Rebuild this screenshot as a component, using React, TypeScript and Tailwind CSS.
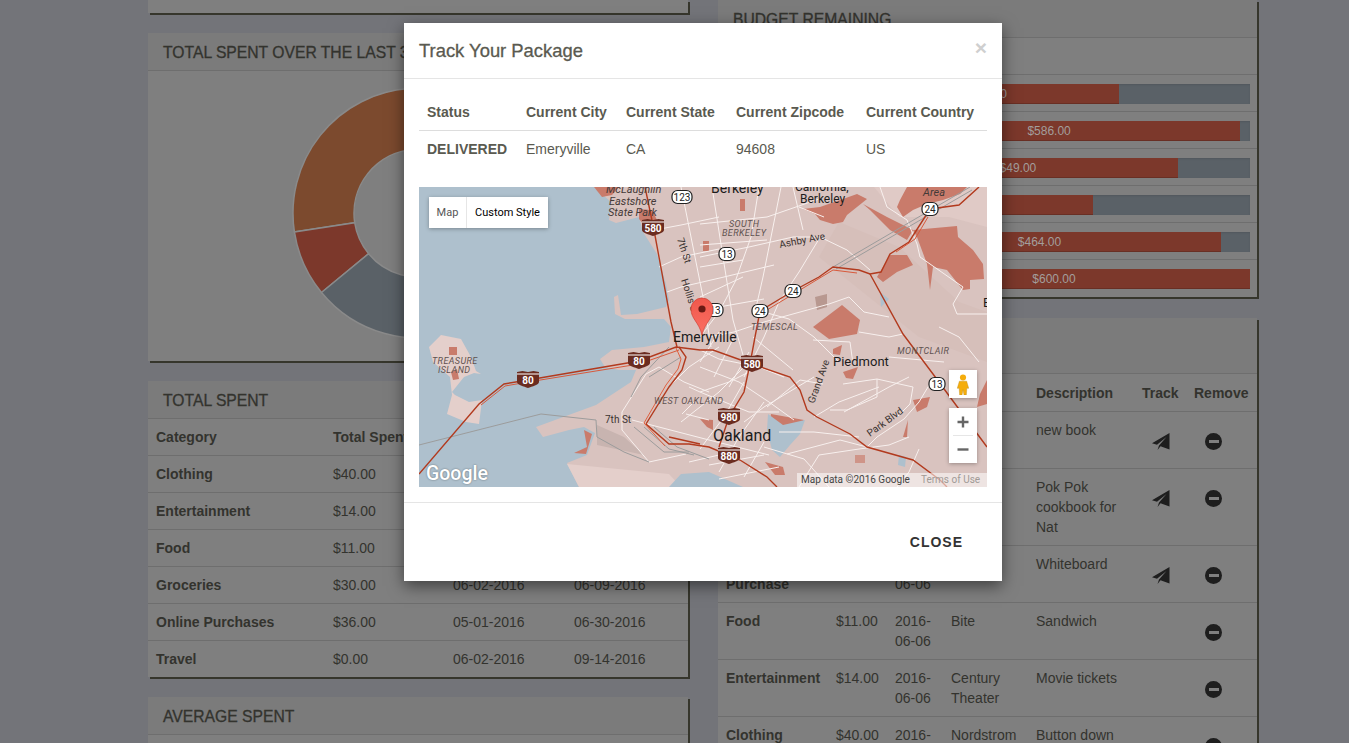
const budgetRows = [
  { pct: 66.6, label: "$40.00" },
  { pct: 97.5, label: "$586.00" },
  { pct: 81.6, label: "$49.00" },
  { pct: 60, label: "$30.00" },
  { pct: 92.6, label: "$464.00" },
  { pct: 100, label: "$600.00" },
];

const spentRows = [
  ["Clothing", "$40.00", "", ""],
  ["Entertainment", "$14.00", "", ""],
  ["Food", "$11.00", "", ""],
  ["Groceries", "$30.00", "06-02-2016", "06-09-2016"],
  ["Online Purchases", "$36.00", "05-01-2016", "06-30-2016"],
  ["Travel", "$0.00", "06-02-2016", "09-14-2016"],
];

const purchaseRows = [
  { cat: "", cost: "", date: "", vendor: "", desc: "new book", track: true },
  { cat: "", cost: "", date: "", vendor: "", desc: "Pok Pok cookbook for Nat", track: true },
  { cat: "Online Purchase", cost: "", date: "2016-06-06", vendor: "", desc: "Whiteboard", track: true },
  { cat: "Food", cost: "$11.00", date: "2016-06-06", vendor: "Bite", desc: "Sandwich", track: false },
  { cat: "Entertainment", cost: "$14.00", date: "2016-06-06", vendor: "Century Theater", desc: "Movie tickets", track: false },
  { cat: "Clothing", cost: "$40.00", date: "2016-06-06", vendor: "Nordstrom", desc: "Button down", track: false },
];

const roads = [
  "M262 0L270 40L284 110L292 160",
  "M293 0L304 70L314 133L326 175",
  "M281 37L348 30L400 12",
  "M281 58L348 53",
  "M281 80L324 73",
  "M281 110L324 90",
  "M281 70L330 60L374 50L401 50L428 63L451 83",
  "M340 0L332 50L316 95L300 125L281 150",
  "M362 0L352 50L344 90L336 125",
  "M374 0L384 43",
  "M400 52L380 85L360 115L345 150L325 190",
  "M225 45L262 38L300 30",
  "M240 80L262 70L300 62",
  "M248 105L262 100L305 90L355 78",
  "M290 150L315 145L345 135L410 117L430 110L445 125L470 130",
  "M281 125L300 120L345 112",
  "M341 124L370 132L395 150L420 175",
  "M461 0L468 20L488 33L498 57L501 70L544 100L534 117L538 127L568 127",
  "M380 20L405 30",
  "M484 147L470 150L440 145",
  "M394 153L431 155L434 177",
  "M424 197L458 192L458 210L428 223L411 223",
  "M458 192L494 200L491 217L478 230",
  "M404 197L381 193L348 220",
  "M368 267L421 253L448 260",
  "M448 260L458 250L485 232L500 215L515 190",
  "M281 163L300 172L340 180L365 190",
  "M281 180L320 195L350 215L375 233",
  "M395 230L420 215L460 200",
  "M281 205L310 195L340 180",
  "M270 200L281 205L330 225L360 225",
  "M240 180L265 195L290 205",
  "M250 200L270 180L300 160",
  "M203 225L227 187L240 180",
  "M203 225L203 243L230 275L267 267",
  "M213 233L290 253L350 268",
  "M263 227L277 213",
  "M267 227L290 233",
  "M262 235L300 205L330 175",
  "M281 262L305 230L325 195",
  "M300 285L320 250L345 215",
  "M325 290L345 255",
  "M281 175L300 145",
  "M295 190L315 150",
  "M310 200L330 165",
  "M334 150L374 183",
  "M345 260L385 272L410 300",
  "M360 245L395 245L440 250",
  "M380 300L400 268L440 262",
  "M440 262L470 258L490 250",
  "M500 262L490 285L478 300",
  "M470 170L525 175",
  "M520 140L540 150L560 175",
  "M325 235L345 220L370 205L395 190",
  "M425 225L470 200L490 190",
  "M290 278L345 268",
  "M300 292L360 280",
  "M270 275L300 268",
];

const rails = [
  "M551 0L414 80",
  "M553 3L417 82",
  "M0 258L122 227L177 233",
  "M177 233L178 250L205 265L230 275",
  "M212 210L222 190L250 160",
  "M215 240L245 265L270 265",
  "M225 240L250 262L275 268",
  "M235 240L258 260L290 272",
  "M230 190L262 170",
];

function Interstate({ x, y, n }: { x: number; y: number; n: string }) {
  return (
    <g transform={`translate(${x} ${y})`}>
      <path d="M-11 -8L-5.5 -9L0 -8L5.5 -9L11 -8L11 2C11 5 4 6.5 0 8C-4 6.5 -11 5 -11 2Z" fill="#6b2c20" />
      <rect x="-11" y="-6.5" width="22" height="1" fill="#fff" />
      <text x="0" y="3.5" textAnchor="middle" fontSize="10" fontWeight="700" fill="#fff">
        {n}
      </text>
    </g>
  );
}

function StateRoute({ x, y, n }: { x: number; y: number; n: string }) {
  const w = n.length > 2 ? 20 : 16;
  return (
    <g transform={`translate(${x} ${y})`}>
      <rect x={-w / 2} y="-6.5" width={w} height="13" rx="5.5" fill="#fff" stroke="#222" strokeWidth="1.2" />
      <text x="0" y="3.5" textAnchor="middle" fontSize="10" fill="#222">
        {n}
      </text>
    </g>
  );
}

function TrackMap() {
  return (
    <svg viewBox="0 0 568 300" className="block h-[300px] w-[568px] font-['Roboto',sans-serif]">
      <defs>
        <linearGradient id="pin" x1="0" y1="0" x2="0" y2="1">
          <stop offset="0" stopColor="#f0584c" />
          <stop offset="1" stopColor="#fb6f63" />
        </linearGradient>
      </defs>
      <rect width="568" height="300" fill="#d9c3bf" />
      {/* hill shading */}
      <path d="M420 35L480 60L540 115L568 125L568 175L500 150L450 110L400 70Z" fill="#d6bfba" />
      <path d="M455 0L568 0L568 40L530 30L480 30Z" fill="#e0cac6" />
      {/* water */}
      <path
        d="M0 0L175 0L192 15L190 33L197 36L220 30L224 45L238 67L247 97L250 113L247 120L218 127L202 128L199 108L195 110L196 127L206 132L245 132L252 140L250 155L225 160L193 163L181 172L186 180L200 183L217 183L212 195L177 218L117 240L124 250L150 243L165 240L176 246L168 268L148 276L160 300L0 300Z"
        fill="#aec0cd"
      />
      <path d="M148 277L250 287L262 300L160 300Z" fill="#e4cfcb" />
      <path d="M250 300L262 287L290 285L324 300Z" fill="#aec0cd" />
      <path d="M178 238L205 250L225 268L178 258Z" fill="#c8b4b0" />
      {/* treasure island */}
      <path d="M10 160L22 148L42 152L52 170L57 184L62 187L55 186L45 190L33 205L36 208L50 215L63 213L60 237L47 235L28 227L33 208L31 190L14 175Z" fill="#e4cfcb" />
      {/* parks */}
      <g fill="#c97b6b">
        <path d="M175 0L200 0L193 8L183 10Z" />
        <path d="M220 22L233 23L240 37L227 40L220 32Z" />
        <path d="M165 243L173 247L167 267L155 266L168 260Z" />
        <path d="M384 22L401 20L424 12L438 7L448 12L438 20L428 28L424 35L414 37L401 33L396 27Z" />
        <path d="M481 13L488 0L548 0L541 7L524 13L508 17L494 23L484 30L478 20Z" />
        <path d="M494 43L538 39L539 50L554 63L564 77L565 92L551 93L551 102L544 103L528 83L514 80L511 103L508 77L498 50Z" />
        <path d="M444 17L468 30L494 43L488 53L471 43L451 23Z" />
        <path d="M458 90L471 68L488 68L494 78L478 85L464 95Z" />
        <path d="M394 140L423 118L441 133L438 147L410 152Z" />
        <path d="M352 227L385 233L372 245L360 247L350 240Z" />
        <path d="M414 162L423 158L421 168L414 167Z" />
        <path d="M424 185L439 180L434 192L427 191Z" />
        <path d="M494 213L511 210L508 220L498 225Z" />
        <path d="M561 207L568 193L568 217L558 220Z" />
        <path d="M484 250L489 233L488 250Z" />
        <path d="M281 232L294 233L294 243L288 240Z" />
        <path d="M346 275L364 280L366 288L356 288Z" />
        <path d="M321 12H326V24H321Z" />
        <path d="M284 54H290V64H284Z" />
        <path d="M30 160H38V168H30Z" />
        <path d="M32 185L38 182L40 192L34 193Z" />
      </g>
      <path d="M396 110L408 107L408 120L398 123Z" fill="#b89890" />
      <path d="M436 268H446V276H436Z" fill="#cf9488" />
      {/* lake */}
      <path d="M349 227L364 238L386 233L381 247L371 258L361 270L353 263L348 243Z" fill="#aec0cd" />
      <path d="M461 105L470 112L462 120Z" fill="#aec0cd" />
      <path d="M480 268L487 270L486 280L479 278Z" fill="#aec0cd" />
      {/* streets */}
      <g fill="none" stroke="#f8f0ee" strokeWidth="1">
        {roads.map((d) => (
          <path key={d} d={d} />
        ))}
      </g>
      <g fill="none" stroke="#9c9c9c" strokeWidth="1">
        {rails.map((d) => (
          <path key={d} d={d} />
        ))}
      </g>
      {/* highways */}
      <g fill="none" stroke="#b23a1e" strokeWidth="1.4">
        <path d="M0 287L60 217L85 197L109 193L220 174L257 160L281 163L294 163L333 177L371 190L381 203L388 223L398 230L431 247L448 260L494 273L521 293L528 300" />
        <path d="M62 218L86 199L109 195L220 177L260 163" stroke="#d8593b" strokeWidth="1" />
        <path d="M226 0L235 43L252 135L258 160" />
        <path d="M260 160L267 170L263 183L250 200L227 237L250 257L270 257L290 260L321 273L348 290L358 300" />
        <path d="M257 161L262 172L259 182L247 198L225 236L246 259" stroke="#e0603f" strokeWidth="1" />
        <path d="M336 150L331 177L325 205L310 230L300 260" />
        <path d="M336 150L341 124L374 104L400 90L414 80L440 83L451 87L462 85L471 67L490 55L511 22L540 18L560 0" />
        <path d="M343 126L376 106L414 83L438 86" stroke="#d8593b" strokeWidth="1" />
        <path d="M451 87L484 147L514 187L568 260" />
        <path d="M477 65L496 52L509 30" stroke="#d8593b" strokeWidth="1" />
        <path d="M281 257L250 250" />
      </g>
      {/* shields */}
      <StateRoute x={263} y={10} n="123" />
      <StateRoute x={308} y={67} n="13" />
      <StateRoute x={296} y={123} n="13" />
      <StateRoute x={341} y={124} n="24" />
      <StateRoute x={374} y={104} n="24" />
      <StateRoute x={511} y={22} n="24" />
      <StateRoute x={518} y={197} n="13" />
      <Interstate x={234} y={41} n="580" />
      <Interstate x={333} y={177} n="580" />
      <Interstate x={109} y={193} n="80" />
      <Interstate x={220} y={174} n="80" />
      <Interstate x={310} y={230} n="980" />
      <Interstate x={310} y={269} n="880" />
      {/* labels */}
      <g fontSize="11" fontStyle="italic" fill="#453a38">
        <text x="187" y="6">McLaughlin</text>
        <text x="190" y="18">Eastshore</text>
        <text x="189" y="29">State Park</text>
        <text x="504" y="9">Area</text>
      </g>
      <g fontSize="9" fontStyle="italic" fill="#5f5250" letterSpacing="0.4">
        <text x="310" y="40">SOUTH</text>
        <text x="303" y="49">BERKELEY</text>
        <text x="332" y="143">TEMESCAL</text>
        <text x="13" y="177">TREASURE</text>
        <text x="19" y="186">ISLAND</text>
        <text x="235" y="217">WEST OAKLAND</text>
        <text x="478" y="167">MONTCLAIR</text>
      </g>
      <g fontSize="10" fill="#3b3331">
        <text x="361" y="61" transform="rotate(-11 361 61)">Ashby Ave</text>
        <text x="258" y="52" transform="rotate(72 258 52)">7th St</text>
        <text x="262" y="93" transform="rotate(72 262 93)">Hollis St</text>
        <text x="186" y="236">7th St</text>
        <text x="395" y="217" transform="rotate(-70 395 217)">Grand Ave</text>
        <text x="451" y="250" transform="rotate(-36 451 250)">Park Blvd</text>
      </g>
      <g fill="#1c1c1c">
        <text x="292" y="6" fontSize="14">Berkeley</text>
        <text x="376" y="4" fontSize="12">California,</text>
        <text x="381" y="16" fontSize="12">Berkeley</text>
        <text x="564" y="120" fontSize="13">E</text>
        <text x="254" y="155" fontSize="14">Emeryville</text>
        <text x="294" y="254" fontSize="16">Oakland</text>
        <text x="414" y="179" fontSize="13">Piedmont</text>
      </g>
      {/* marker */}
      <path d="M283 148C280 135 272 132 272 122A11 11 0 1 1 294 122C294 132 286 135 283 148Z" fill="url(#pin)" stroke="#c9372c" strokeWidth="0.6" />
      <circle cx="283" cy="122" r="3.6" fill="#6a1a14" />
    </svg>
  );
}

function SendIcon() {
  return (
    <svg viewBox="0 0 18 17" className="ml-[10px] mt-[13px] block h-[17px] w-[18px]" fill="#1e1e1e">
      <path d="M17.5 0L0 10.3L5 11.8L14.5 4L7 12.5L5.5 17L8.5 13.2L17.5 16.5Z" />
    </svg>
  );
}

function RemoveIcon() {
  return (
    <span className="ml-[11px] mt-[13px] flex h-[17px] w-[17px] items-center justify-center rounded-full bg-[#1e1e1e]">
      <span className="h-[3px] w-[10px] bg-[#7f7f7f]" />
    </span>
  );
}

function PanelTitle({ children, tall }: { children?: React.ReactNode; tall?: boolean }) {
  return (
    <div
      className={
        "overflow-hidden whitespace-nowrap border-b border-[#6e6e6e] bg-[#7b7b7b] px-[15px] text-[15.7px] leading-[39px] text-[#33332e] [-webkit-text-stroke:0.3px] " +
        (tall ? "h-[56px]" : "h-[38px]")
      }
    >
      {children}
    </div>
  );
}

function Background() {
  return (
    <div className="flex h-[743px] items-start gap-[30px] overflow-hidden bg-[#737479] pl-[148px] text-[14px] leading-[20px] text-[#33332e]">
      <div className="flex w-[540px] shrink-0 flex-col gap-[20px]">
        <div className="h-[13px] shrink-0 bg-[#7f7f7f] shadow-[2px_2px_0_#36362c]" />
        <div className="shrink-0 bg-[#7f7f7f] shadow-[2px_2px_0_#36362c]">
          <PanelTitle>TOTAL SPENT OVER THE LAST 30 DAYS</PanelTitle>
          <div className="flex h-[290px] justify-center pt-[16px]">
            <svg viewBox="-1 -1 252 252" className="h-[252px] w-[252px]" stroke="#8a8a8a" strokeWidth="1.5">
              <path d="M1.4 143.9A125 125 0 1 1 250 125L189 125A64 64 0 1 0 61.7 134.7Z" fill="#7c4a2e" />
              <path d="M1.4 143.9A125 125 0 0 0 28.5 204.5L75.6 165.7A64 64 0 0 1 61.7 134.7Z" fill="#7c382b" />
              <path d="M28.5 204.5A125 125 0 0 0 250 125L189 125A64 64 0 0 1 75.6 165.7Z" fill="#5a6167" />
            </svg>
          </div>
        </div>
        <div className="shrink-0 bg-[#7f7f7f] shadow-[2px_2px_0_#36362c]">
          <PanelTitle>TOTAL SPENT</PanelTitle>
          <table className="w-full table-fixed border-collapse">
            <colgroup>
              <col className="w-[177px]" />
              <col className="w-[120px]" />
              <col className="w-[121px]" />
              <col className="w-[122px]" />
            </colgroup>
            <thead>
              <tr>
                <th className="p-2 text-left font-bold">Category</th>
                <th className="whitespace-nowrap p-2 text-left font-bold">Total Spent</th>
                <th />
                <th />
              </tr>
            </thead>
            <tbody>
              {spentRows.map((row) => (
                <tr key={row[0]} className="border-t border-[#6e6e6e]">
                  <td className="p-2 font-bold">{row[0]}</td>
                  <td className="p-2">{row[1]}</td>
                  <td className="p-2">{row[2]}</td>
                  <td className="p-2">{row[3]}</td>
                </tr>
              ))}
            </tbody>
          </table>
        </div>
        <div className="h-[60px] shrink-0 bg-[#7f7f7f] shadow-[2px_2px_0_#36362c]">
          <PanelTitle>AVERAGE SPENT</PanelTitle>
        </div>
      </div>
      <div className="flex w-[539px] shrink-0 flex-col gap-[21px]">
        <div className="shrink-0 bg-[#7f7f7f] shadow-[2px_2px_0_#36362c]">
          <PanelTitle>BUDGET REMAINING</PanelTitle>
          <div className="h-[37px] border-b border-[#6e6e6e]" />
          {budgetRows.map((row, i) => (
            <div key={row.label} className={"h-[37px] pb-[8px] pl-[140px] pr-[7px] pt-[9px] " + (i < 5 ? "border-b border-[#6e6e6e]" : "")}>
              <div className="h-[20px] bg-[#5a6167] shadow-[inset_0_1px_2px_rgba(0,0,0,0.1)]">
                <div
                  className="h-full bg-[#7c382b] text-center text-[12px] leading-[20px] text-[#a39e9c] shadow-[inset_0_-1px_0_rgba(0,0,0,0.15)]"
                  style={{ width: `${row.pct}%` }}
                >
                  {row.label}
                </div>
              </div>
            </div>
          ))}
        </div>
        <div className="shrink-0 bg-[#7f7f7f] shadow-[2px_2px_0_#36362c]">
          <PanelTitle tall />
          <table className="w-full table-fixed border-collapse">
            <colgroup>
              <col className="w-[110px]" />
              <col className="w-[59px]" />
              <col className="w-[56px]" />
              <col className="w-[85px]" />
              <col className="w-[106px]" />
              <col className="w-[52px]" />
              <col className="w-[71px]" />
            </colgroup>
            <thead>
              <tr className="h-[37px]">
                <th />
                <th />
                <th />
                <th />
                <th className="px-2 pb-[7px] pt-[9px] text-left font-bold">Description</th>
                <th className="px-2 pb-[7px] pt-[9px] text-left font-bold">Track</th>
                <th className="px-2 pb-[7px] pt-[9px] text-left font-bold">Remove</th>
              </tr>
            </thead>
            <tbody>
              {purchaseRows.map((row) => (
                <tr key={row.desc} className="h-[57px] border-t border-[#6e6e6e] align-top">
                  <td className="p-2 font-bold">{row.cat}</td>
                  <td className="p-2">{row.cost}</td>
                  <td className="p-2">{row.date}</td>
                  <td className="p-2">{row.vendor}</td>
                  <td className="p-2">{row.desc}</td>
                  <td className="p-2">{row.track ? <SendIcon /> : null}</td>
                  <td className="p-2">
                    <RemoveIcon />
                  </td>
                </tr>
              ))}
            </tbody>
          </table>
        </div>
      </div>
    </div>
  );
}

function TrackModal() {
  return (
    <div className="absolute left-[404px] top-[23px] h-[558px] w-[598px] bg-white text-[14px] leading-[20px] text-[#5a5a50] shadow-[0_5px_15px_rgba(0,0,0,0.5)]">
      <div className="flex h-[56px] items-start justify-between border-b border-[#e5e5e5] px-[15px] pt-[15px]">
        <h4 className="text-[18.4px] leading-[26px] [-webkit-text-stroke:0.3px]">Track Your Package</h4>
        <span className="mt-[-1px] text-[21px] font-bold leading-[21px] text-[#cfcfcf]">×</span>
      </div>
      <div className="px-[15px] pt-[15px]">
        <table className="w-full table-fixed border-collapse">
          <colgroup>
            <col className="w-[99px]" />
            <col className="w-[100px]" />
            <col className="w-[110px]" />
            <col className="w-[130px]" />
            <col className="w-[129px]" />
          </colgroup>
          <thead>
            <tr className="border-b border-[#ddd]">
              <th className="p-2 text-left font-bold">Status</th>
              <th className="p-2 text-left font-bold">Current City</th>
              <th className="p-2 text-left font-bold">Current State</th>
              <th className="p-2 text-left font-bold">Current Zipcode</th>
              <th className="p-2 text-left font-bold">Current Country</th>
            </tr>
          </thead>
          <tbody>
            <tr>
              <td className="p-2 font-bold">DELIVERED</td>
              <td className="p-2">Emeryville</td>
              <td className="p-2">CA</td>
              <td className="p-2">94608</td>
              <td className="p-2">US</td>
            </tr>
          </tbody>
        </table>
        <div className="relative mt-[20px] h-[300px] w-[568px] overflow-hidden font-['Roboto',sans-serif]">
          <TrackMap />
          <div className="absolute left-[10px] top-[10px] flex h-[31px] bg-white text-[11px] leading-[31px] shadow-[0_1px_4px_rgba(0,0,0,0.3)]">
            <span className="w-[38px] border-r border-[#e6e6e6] text-center text-[#565656]">Map</span>
            <span className="w-[81px] text-center text-black">Custom Style</span>
          </div>
          <div className="absolute left-[530px] top-[183px] flex h-[28px] w-[28px] items-center justify-center bg-white shadow-[0_1px_4px_rgba(0,0,0,0.3)]">
            <svg viewBox="0 0 12 22" className="h-[21px] w-[12px]">
              <circle cx="6" cy="3.6" r="3.2" fill="#f5ad0c" />
              <path d="M2.2 7.5H9.8L12 15H10L9.5 22H7L6 16.5L5 22H2.5L2 15H0Z" fill="#f5ad0c" stroke="#b98a1c" strokeWidth="0.4" />
            </svg>
          </div>
          <div className="absolute left-[530px] top-[221px] h-[55px] w-[28px] bg-white shadow-[0_1px_4px_rgba(0,0,0,0.3)]">
            <svg viewBox="0 0 28 55" className="h-[55px] w-[28px]">
              <path d="M8.5 14H19.5M14 8.5V19.5" stroke="#666" strokeWidth="2.4" />
              <path d="M4 27.5H24" stroke="#e6e6e6" />
              <path d="M8.5 41.5H19.5" stroke="#666" strokeWidth="2.4" />
            </svg>
          </div>
          <span className="absolute bottom-[3px] left-[7px] text-[19.5px] font-medium leading-[20px] text-white [text-shadow:0_0_2px_rgba(0,0,0,0.45)]">
            Google
          </span>
          <div className="absolute bottom-0 right-0 flex h-[14px] w-[190px] bg-white/55 pl-[4px] text-[10px] leading-[14px] text-[#444]">
            <span>Map data ©2016 Google</span>
            <span className="ml-[11px] text-[#a09a96]">Terms of Use</span>
          </div>
        </div>
      </div>
      <div className="mt-[15px] flex h-[79px] items-center justify-end border-t border-[#e5e5e5] pr-[39px]">
        <span className="text-[14px] font-bold tracking-[1px] text-[#333]">CLOSE</span>
      </div>
    </div>
  );
}

export default function App() {
  return (
    <div className="relative h-[743px] w-[1349px] overflow-hidden font-['Liberation_Sans',Arial,sans-serif]">
      <Background />
      <TrackModal />
    </div>
  );
}
